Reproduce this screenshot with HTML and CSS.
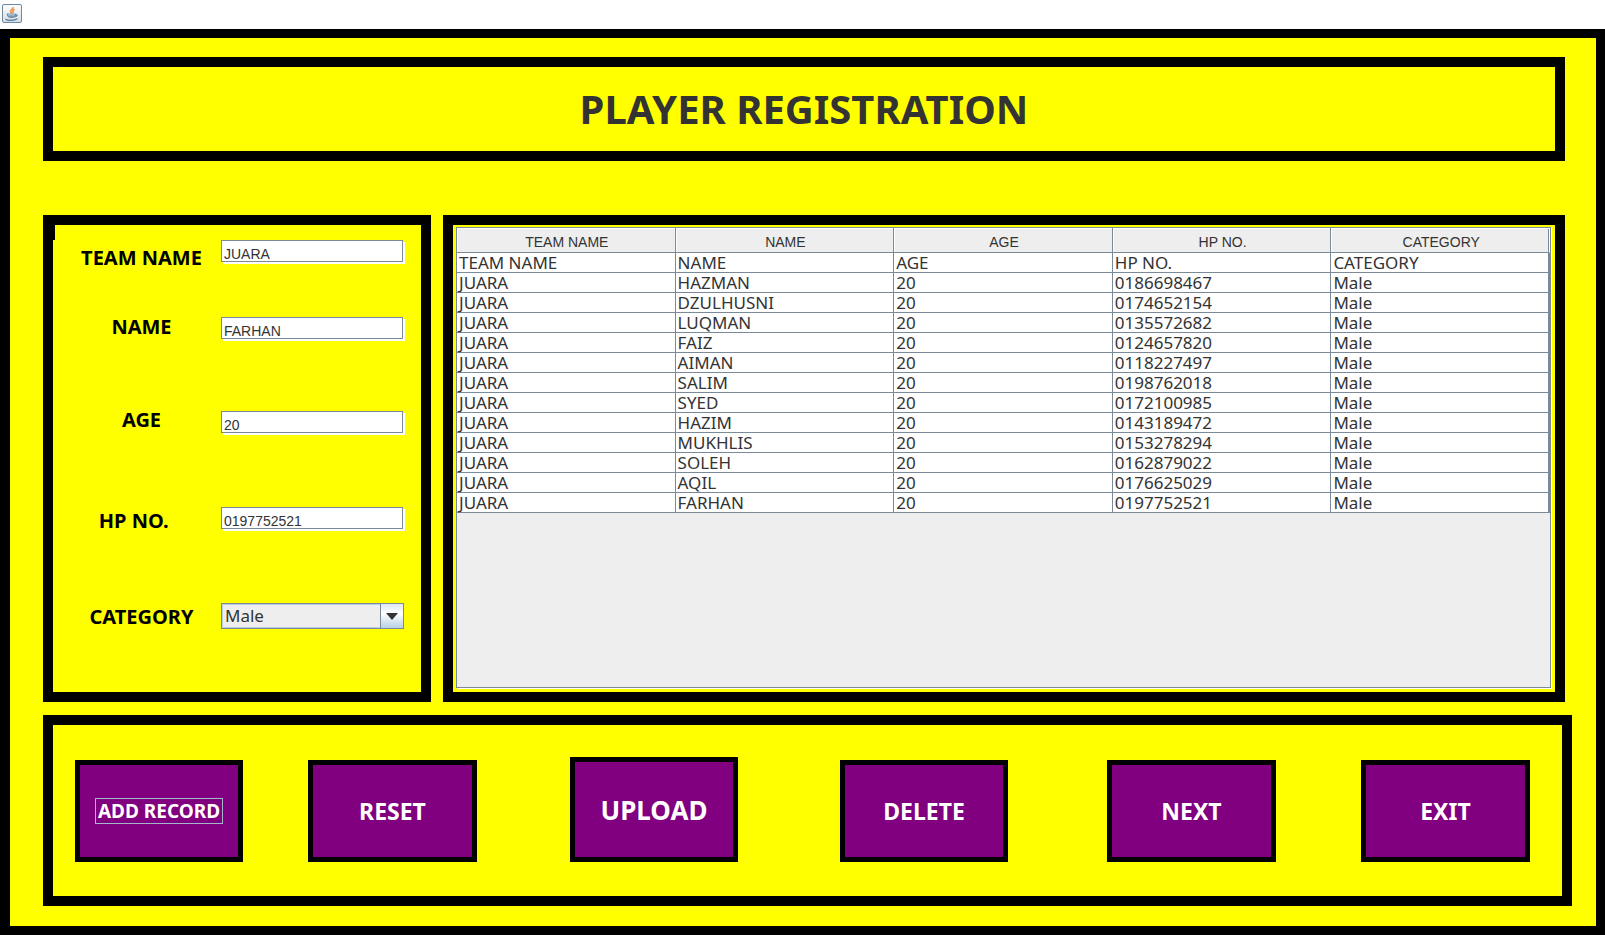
FILE: index.html
```html
<!DOCTYPE html>
<html lang="en">
<head>
<meta charset="utf-8">
<title>Player Registration</title>
<link rel="stylesheet" href="styles.css">
</head>
<body>
<header class="titlebar">
  <svg class="app-icon" viewBox="0 0 20 20" aria-hidden="true">
    <defs><linearGradient id="tile" x1="0" y1="0" x2="0" y2="1"><stop offset="0" stop-color="#fff"/><stop offset="1" stop-color="#d5dce2"/></linearGradient></defs>
    <rect x="0.5" y="0.5" width="19" height="18" rx="1.5" fill="url(#tile)" stroke="#6c8aa3"/>
    <path d="M11 3C12 5 8 6 8.500 7.500C9 8.500 9.500 8.500 9.500 9.500M12.500 5.500C10.500 6.500 10.500 7.500 11.500 9" fill="none" stroke="#ef8b3c" stroke-width="1.500"/>
    <path d="M5 10H13.500L13 12.500C12 14 7 14 6 12.500ZM13.500 10.500C16 10 16 12.500 13 13" fill="#7d9db8" stroke="#5b80a0" stroke-width="0.800"/>
    <path d="M6 10.800H13" stroke="#d6e2ec" stroke-width="0.800"/>
    <path d="M3.500 15.200C6 16.800 12 16.800 15.500 14.800" fill="none" stroke="#54789a" stroke-width="1.200"/>
  </svg>
</header>
<main class="frame">
  <section class="panel banner"><h1 class="banner-title">PLAYER REGISTRATION</h1></section>
  <div class="workspace">
    <form class="panel entry" id="entry">
      <div class="labels">
        <label for="team">TEAM NAME</label>
        <label for="name">NAME</label>
        <label for="age">AGE</label>
        <label for="phone">HP NO.&nbsp;&nbsp;&nbsp;</label>
        <label for="category">CATEGORY</label>
      </div>
      <div class="fields">
        <input class="field" id="team" type="text" value="JUARA">
        <input class="field" id="name" type="text" value="FARHAN">
        <input class="field" id="age" type="text" value="20">
        <input class="field" id="phone" type="text" value="0197752521">
        <div class="combo">
          <select class="combo-select" id="category"><option>Male</option><option>Female</option></select>
          <span class="combo-arrow"><svg width="12" height="7" viewBox="0 0 12 7" aria-hidden="true"><path d="M0 0H12L6 7Z" fill="#333"/></svg></span>
        </div>
      </div>
    </form>
    <section class="panel records">
      <div class="scroll">
        <table class="grid">
          <thead><tr><th>TEAM NAME</th><th>NAME</th><th>AGE</th><th>HP NO.</th><th>CATEGORY</th></tr></thead>
          <tbody>
            <tr><td>TEAM NAME</td><td>NAME</td><td>AGE</td><td>HP NO.</td><td>CATEGORY</td></tr>
            <tr><td>JUARA</td><td>HAZMAN</td><td>20</td><td>0186698467</td><td>Male</td></tr>
            <tr><td>JUARA</td><td>DZULHUSNI</td><td>20</td><td>0174652154</td><td>Male</td></tr>
            <tr><td>JUARA</td><td>LUQMAN</td><td>20</td><td>0135572682</td><td>Male</td></tr>
            <tr><td>JUARA</td><td>FAIZ</td><td>20</td><td>0124657820</td><td>Male</td></tr>
            <tr><td>JUARA</td><td>AIMAN</td><td>20</td><td>0118227497</td><td>Male</td></tr>
            <tr><td>JUARA</td><td>SALIM</td><td>20</td><td>0198762018</td><td>Male</td></tr>
            <tr><td>JUARA</td><td>SYED</td><td>20</td><td>0172100985</td><td>Male</td></tr>
            <tr><td>JUARA</td><td>HAZIM</td><td>20</td><td>0143189472</td><td>Male</td></tr>
            <tr><td>JUARA</td><td>MUKHLIS</td><td>20</td><td>0153278294</td><td>Male</td></tr>
            <tr><td>JUARA</td><td>SOLEH</td><td>20</td><td>0162879022</td><td>Male</td></tr>
            <tr><td>JUARA</td><td>AQIL</td><td>20</td><td>0176625029</td><td>Male</td></tr>
            <tr><td>JUARA</td><td>FARHAN</td><td>20</td><td>0197752521</td><td>Male</td></tr>
          </tbody>
        </table>
      </div>
    </section>
  </div>
  <section class="panel actions">
    <button class="action add" type="submit" form="entry"><span class="focus-ring">ADD RECORD</span></button>
    <button class="action reset" type="button">RESET</button>
    <button class="action upload" type="button">UPLOAD</button>
    <button class="action delete" type="button">DELETE</button>
    <button class="action next" type="button">NEXT</button>
    <button class="action exit" type="button">EXIT</button>
  </section>
</main>
</body>
</html>
```
FILE: styles.css
```css
* { box-sizing: border-box; }

body {
  display: flex;
  flex-direction: column;
  min-height: 100vh;
  margin: 0;
  background: #fff;
  color: #333;
  font-family: "Noto Sans", "DejaVu Sans", sans-serif;
}

.titlebar {
  display: flex;
  align-items: center;
  height: 29px;
  padding: 0 2px 2px;
}
.app-icon { width: 20px; height: 20px; }

.frame {
  display: flex;
  flex: 1;
  flex-direction: column;
  padding: 19px 24px 20px 33px;
  border: 9px solid #000;
  border-left-width: 10px;
  background: #ff0;
}
.panel { border: 10px solid #000; }

.banner {
  display: flex;
  align-items: center;
  justify-content: center;
  height: 104px;
  margin: 0 7px 54px 0;
}
.banner-title { margin: 0; font-size: 40px; font-weight: 700; line-height: 48px; }

.workspace {
  display: grid;
  flex: 1;
  grid-template-columns: 388px 1fr;
  gap: 12px;
  margin: 0 7px 13px 0;
}

.entry {
  position: relative;
  display: grid;
  grid-template-columns: 168px 183px;
}
.entry::before {
  content: "";
  position: absolute;
  top: 0;
  left: 0;
  width: 2px;
  height: 15px;
  background: #000;
}
.labels {
  display: grid;
  grid-template-rows: 65fr 73fr 113fr 90fr 101fr 25fr;
  align-items: center;
  justify-items: center;
  padding-left: 9px;
  color: #000;
  font-size: 20px;
  font-weight: 700;
  line-height: 24px;
}
.fields {
  display: grid;
  grid-template-rows: 77fr 94fr 96fr 96fr 89fr;
  align-items: start;
  padding-top: 15px;
}
.field {
  width: 182px;
  height: 22px;
  margin: 0;
  padding: 5px 2px 0;
  border: 1px solid #7a8a99;
  border-radius: 0;
  outline: 0;
  background: #fff;
  box-shadow: 2px 2px 0 #fff;
  color: #333;
  font-family: "Liberation Sans", Arial, sans-serif;
  font-size: 14px;
}
.combo { position: relative; height: 26px; }
.combo-select {
  appearance: none;
  width: 100%;
  height: 100%;
  padding: 0 28px 0 3px;
  border: 1px solid #7a8a99;
  border-radius: 0;
  outline: 0;
  background: #eee;
  box-shadow: inset 0 0 0 1px #b8cfe5;
  color: #333;
  font-family: inherit;
  font-size: 17px;
  line-height: 24px;
}
.combo-arrow {
  position: absolute;
  top: 0;
  right: 0;
  bottom: 0;
  display: flex;
  align-items: center;
  justify-content: center;
  width: 24px;
  border: 1px solid #7a8a99;
  background: linear-gradient(#dde8f3, #fff 40%, #b8cfe5);
  pointer-events: none;
}

.records { padding: 2px 4px 4px 3px; }
.scroll {
  height: 100%;
  border: 1px solid #7a8a99;
  background: #eee;
  box-shadow: 1px 1px 0 #fff;
}
.grid {
  width: 100%;
  border-spacing: 0;
  table-layout: fixed;
}
.grid th {
  height: 25px;
  padding: 3px 0 0 2px;
  border-right: 1px solid #7a8a99;
  border-bottom: 1px solid #7a8a99;
  background: #eee;
  box-shadow: inset 1px 1px 0 #fff;
  font-family: "Liberation Sans", Arial, sans-serif;
  font-size: 14px;
  font-weight: 400;
  line-height: 16px;
}
.grid th:last-child {
  border-right-color: #fff;
  box-shadow: inset 1px 1px 0 #fff, inset -1px 0 0 #7a8a99;
}
.grid td {
  height: 20px;
  padding: 1px 2px 0;
  border-right: 1px solid #7a8a99;
  border-bottom: 1px solid #7a8a99;
  background: #fff;
  font-size: 17px;
  line-height: 18px;
}
.grid td:last-child { border-right-width: 2px; }

.actions {
  display: grid;
  grid-template-columns: 168px 65fr 169px 93fr 168px 102fr 168px 99fr 169px 85fr 169px;
  align-items: end;
  height: 191px;
  padding: 0 32px 34px 22px;
}
.action {
  grid-row: 1;
  height: 102px;
  padding: 0;
  border: 5px solid #000;
  border-radius: 0;
  background: #800080;
  color: #fff;
  font-family: inherit;
  font-size: 23px;
  font-weight: 700;
}
.add { grid-column: 1; font-size: 19px; }
.reset { grid-column: 3; }
.upload { grid-column: 5; height: 105px; font-size: 26px; }
.delete { grid-column: 7; }
.next { grid-column: 9; }
.exit { grid-column: 11; }
.focus-ring {
  display: inline-block;
  padding: 0 2px;
  border: 1px solid #a3b8cc;
  line-height: 24px;
}
```
